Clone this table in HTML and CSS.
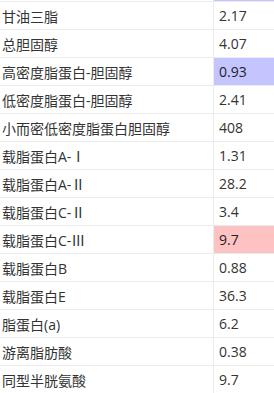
FILE: index.html
```html
<!DOCTYPE html>
<html lang="zh">
<head>
<meta charset="utf-8">
<link rel="stylesheet" href="styles.css">
</head>
<body>
<div class="table">
  <div class="row stub"><div class="name"></div><div class="val low"></div></div>
  <div class="row"><div class="name">甘油三脂</div><div class="val">2.17</div></div>
  <div class="row"><div class="name">总胆固醇</div><div class="val">4.07</div></div>
  <div class="row"><div class="name">高密度脂蛋白-胆固醇</div><div class="val low">0.93</div></div>
  <div class="row"><div class="name">低密度脂蛋白-胆固醇</div><div class="val">2.41</div></div>
  <div class="row"><div class="name">小而密低密度脂蛋白胆固醇</div><div class="val">408</div></div>
  <div class="row"><div class="name">载脂蛋白A-Ⅰ</div><div class="val">1.31</div></div>
  <div class="row"><div class="name">载脂蛋白A-Ⅱ</div><div class="val">28.2</div></div>
  <div class="row"><div class="name">载脂蛋白C-Ⅱ</div><div class="val">3.4</div></div>
  <div class="row"><div class="name">载脂蛋白C-Ⅲ</div><div class="val high">9.7</div></div>
  <div class="row"><div class="name">载脂蛋白B</div><div class="val">0.88</div></div>
  <div class="row"><div class="name">载脂蛋白E</div><div class="val">36.3</div></div>
  <div class="row"><div class="name">脂蛋白(a)</div><div class="val">6.2</div></div>
  <div class="row"><div class="name">游离脂肪酸</div><div class="val">0.38</div></div>
  <div class="row"><div class="name">同型半胱氨酸</div><div class="val">9.7</div></div>
</div>
</body>
</html>
```
FILE: styles.css
```css
html, body {
  margin: 0;
  padding: 0;
  background: #ffffff;
}
body {
  width: 274px;
  height: 393px;
  overflow: hidden;
  font-family: "Open Sans", "Noto Sans CJK SC", sans-serif;
  font-size: 14px;
  color: #333333;
}
.table {
  display: flex;
  flex-direction: column;
}
.row {
  display: grid;
  grid-template-columns: 213px 1fr;
  height: 27px;
  border-bottom: 1px solid #ebebeb;
}
.row.stub {
  height: 1px;
}
.name {
  display: flex;
  align-items: center;
  padding-left: 2px;
  white-space: nowrap;
  overflow: hidden;
}
.val {
  display: flex;
  align-items: center;
  padding-left: 5px;
  border-left: 1px solid #ebebeb;
}
.val.low {
  background: #c4c4ff;
  color: #222222;
}
.val.high {
  background: #ffc2c2;
  color: #222222;
}
```
